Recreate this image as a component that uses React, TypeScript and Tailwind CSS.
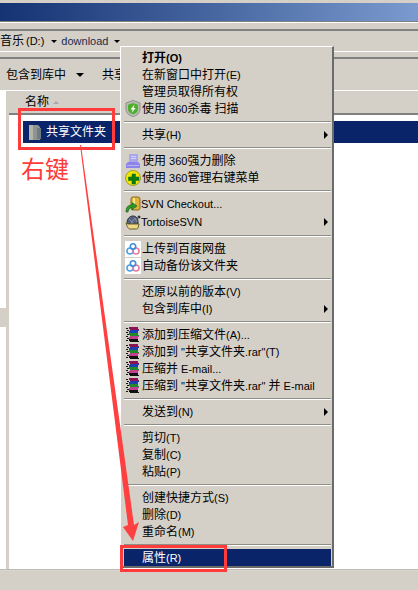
const font = "font-['Liberation_Sans','Noto_Sans_CJK_SC',sans-serif]";

function Shield() {
  return (
    <svg width="16" height="17" viewBox="0 0 16 17">
      <path d="M8 .5 15 3v6c0 4-3 6.500-7 7.500C4 15.500 1 13 1 9V3z" fill="#b9bdb6" stroke="#8c908a" />
      <path d="M8 3l5 1.800V9c0 2.800-2 4.500-5 5.300C5 13.500 3 11.800 3 9V4.800z" fill="#4fae2e" />
      <path d="M9.500 4.500 5.500 9.500h2.300L6.500 13l4.200-5H8.500z" fill="#fff" />
    </svg>
  );
}

function Eraser() {
  return (
    <svg width="16" height="16" viewBox="0 0 16 16">
      <rect x="4" y="1" width="9" height="9" rx="1" fill="#aaa6ee" />
      <path d="M3 9h10l2 2v4H1v-4z" fill="#8b85ea" />
      <rect x="6" y="3" width="5" height="1" fill="#d6d4f6" />
      <rect x="6" y="5" width="5" height="1" fill="#d6d4f6" />
      <rect x="2" y="12" width="12" height="1" fill="#b8b4f2" />
    </svg>
  );
}

function PlusBall() {
  return (
    <svg width="16" height="16" viewBox="0 0 16 16">
      <circle cx="8" cy="8" r="7.500" fill="#f2e600" stroke="#6f7a00" strokeWidth=".6" />
      <path d="M7 4h3.500v3H14v3.500h-3.500V14H7v-3.500H3.500V7H7z" fill="#0f7a12" stroke="#063" strokeWidth=".5" />
    </svg>
  );
}

function Checkout() {
  return (
    <svg width="16" height="17" viewBox="0 0 16 17">
      <rect x="6" y="1" width="9" height="13" rx="2" fill="#e0b23c" stroke="#8f6a12" />
      <rect x="8" y="2" width="2" height="11" fill="#f8e39a" />
      <path d="M1 16c0-5 2-7 6-7V6.500L12 10l-5 4v-2.500c-2 0-3.500 1.500-4 4.500z" fill="#2e9a25" stroke="#125c10" strokeWidth=".6" />
    </svg>
  );
}

function Tortoise() {
  return (
    <svg width="16" height="16" viewBox="0 0 16 16">
      <path d="M2 9c0-4 2.500-7 6-7s5 3 5 6v2H3z" fill="#55607c" stroke="#2a3040" />
      <path d="M4 5l3 3 3-4M7 8v2M10 4l2 4" stroke="#8d96ae" fill="none" />
      <path d="M1 9l2 1h11l-1 4c-.3 1-1 1-2 1H5c-2 0-3-3-4-6z" fill="#ecd98a" stroke="#6f5f20" />
      <circle cx="14" cy="3" r="1.500" fill="#333" />
    </svg>
  );
}

function Cloud() {
  return (
    <svg width="16" height="16" viewBox="0 0 16 16">
      <rect width="16" height="16" fill="#fff" />
      <circle cx="5" cy="10" r="3" fill="none" stroke="#4aa3e8" strokeWidth="1.600" />
      <circle cx="11" cy="10" r="3" fill="none" stroke="#e87aa0" strokeWidth="1.600" />
      <circle cx="8" cy="5.500" r="2.700" fill="none" stroke="#3f8fdc" strokeWidth="1.600" />
    </svg>
  );
}

function Rar() {
  return (
    <svg width="14" height="15" viewBox="0 0 14 15" shapeRendering="crispEdges">
      <path d="M3 0h9l1 3H4z" fill="#8a1452" />
      <path d="M4 3h9l-1 3H3z" fill="#1e3fae" />
      <path d="M3 6h9l1 3H4z" fill="#1f8a2a" />
      <path d="M4 9h9l-1 3H3z" fill="#c23f8f" />
      <path d="M3 12h9l1 3H4z" fill="#111" />
      <path d="M0 1h2v1H0zM1 3h2v1H1zM0 5h2v1H0zM1 7h2v1H1zM0 9h2v1H0zM1 11h2v1H1zM0 13h2v1H0z" fill="#111" />
    </svg>
  );
}

// Latin runs sit a size below the CJK ones, as Tahoma 11 next to a 12px CJK face
function Label({ text }: { text: string }) {
  return (
    <>
      {text.split(/([\u4e00-\u9fff]+)/).map((part, i) =>
        i % 2 === 1 ? (
          <span key={i} className="text-[12px]">{part}</span>
        ) : (
          <span key={i} className="text-[11px]">{part}</span>
        )
      )}
    </>
  );
}

function Item({ label, bold, icon, arrow, tight, h = "h-[17px]" }: { label: string; bold?: boolean; icon?: React.ReactNode; arrow?: boolean; tight?: boolean; h?: string }) {
  return (
    <div className={`flex items-center ${h}`}>
      <div className="w-[18px] flex justify-center shrink-0">{icon}</div>
      <span className={`whitespace-nowrap ${tight ? "-ml-[1px]" : ""} ${bold ? "font-bold" : ""}`}>
        <Label text={label} />
      </span>
      {arrow && <span className="ml-auto mr-[3px] w-0 h-0 border-y-[4px] border-y-transparent border-l-[4px] border-l-black" />}
    </div>
  );
}

function Sep() {
  return (
    <div className="h-[9px] flex items-center">
      <div className="w-full h-[2px] bg-[#8f8d88] border-b border-b-white" />
    </div>
  );
}

export default function App() {
  return (
    <div className={`${font} relative w-[418px] h-[590px] overflow-hidden bg-[#d4d0c8] text-[12px] text-black flex flex-col`}>
      {/* window chrome */}
      <div className="h-[3px] bg-[#d4d0c8]" />
      <div className="h-[18px] bg-gradient-to-r from-[#153272] to-[#7b9bcf]" />
      <div className="h-[1px] bg-[#808080]" />
      <div className="h-[1px] bg-white" />
      <div className="h-[6px]" />
      <div className="h-[2px] bg-[#808080]" />

      <div className="h-[20px] flex items-center">
        <span>音乐</span>
        <span className="ml-[2px] text-[11px]">(D:)</span>
        <span className="ml-[7px] w-0 h-0 border-x-[3px] border-x-transparent border-t-[3px] border-t-black" />
        <span className="ml-[4px] text-[#1c2a4a] text-[11px]">download</span>
        <span className="ml-[6px] w-0 h-0 border-x-[3px] border-x-transparent border-t-[3px] border-t-black" />
      </div>
      <div className="h-[1px] bg-white" />
      <div className="h-[5px]" />
      <div className="h-[2px] bg-[#808080]" />

      <div className="h-[31px] flex items-center pl-[6px]">
        <span>包含到库中</span>
        <span className="ml-[10px] w-0 h-0 border-x-[4px] border-x-transparent border-t-[4px] border-t-black" />
        <span className="ml-[18px]">共享</span>
      </div>
      <div className="h-[1px] bg-white" />

      <div className="flex-1 flex min-h-0">
        {/* nav pane */}
        <div className="w-[6px] bg-white flex flex-col">
          <div className="h-[217px]" />
          <div className="h-[19px] bg-[#d4d0c8]" />
        </div>
        <div className="w-[3px]" />

        {/* file list */}
        <div className="flex-1 flex flex-col">
          <div className="h-[22px] flex items-center pl-[16px]">
            <span>名称</span>
            <span className="ml-[4px] w-0 h-0 border-x-[3px] border-x-transparent border-b-[3px] border-b-[#a8a8a8]" />
          </div>
          <div className="h-[2px] bg-[#808080]" />
          <div className="flex-1 bg-white pt-[6px] pl-[14px]">
            <div className="h-[22px] bg-[#0a246a] text-white flex items-center pl-[5px] gap-[4px]">
              <svg width="14" height="17" viewBox="0 0 14 17">
                <path d="M1 1h9l2 2v13H1z" fill="#8f9492" />
                <path d="M1 1h4v15H1z" fill="#b3b6a6" />
                <path d="M9 4v11h4V4z" fill="#6f7a80" />
              </svg>
              <span>共享文件夹</span>
            </div>
          </div>
        </div>
      </div>

      <div className="h-[2px] bg-[#d9d6d0] border-t border-t-[#bdbab3]" />
      <div className="h-[19px]" />

      {/* context menu */}
      <div className="absolute left-[120px] top-[46px] w-[214px] bg-[#d4d0c8] border-t border-l border-t-white border-l-white border-r-2 border-r-[#6b6b6b] border-b-2 border-b-[#6b6b6b] pl-[3px] pr-[1px] pt-[2px]">
        <Item label="打开(O)" bold />
        <Item label="在新窗口中打开(E)" />
        <Item label="管理员取得所有权" />
        <Item label="使用 360杀毒 扫描" icon={<Shield />} />
        <Sep />
        <Item label="共享(H)" arrow />
        <Sep />
        <Item label="使用 360强力删除" icon={<Eraser />} />
        <Item label="使用 360管理右键菜单" icon={<PlusBall />} />
        <Sep />
        <Item label="SVN Checkout..." icon={<Checkout />} tight h="h-[18px]" />
        <Item label="TortoiseSVN" icon={<Tortoise />} tight arrow h="h-[18px]" />
        <Sep />
        <Item label="上传到百度网盘" icon={<Cloud />} />
        <Item label="自动备份该文件夹" icon={<Cloud />} />
        <Sep />
        <Item label="还原以前的版本(V)" />
        <Item label="包含到库中(I)" arrow />
        <Sep />
        <Item label="添加到压缩文件(A)..." icon={<Rar />} />
        <Item label='添加到 "共享文件夹.rar"(T)' icon={<Rar />} />
        <Item label="压缩并 E-mail..." icon={<Rar />} />
        <Item label='压缩到 "共享文件夹.rar" 并 E-mail' icon={<Rar />} />
        <Sep />
        <Item label="发送到(N)" arrow />
        <Sep />
        <Item label="剪切(T)" />
        <Item label="复制(C)" />
        <Item label="粘贴(P)" />
        <Sep />
        <Item label="创建快捷方式(S)" />
        <Item label="删除(D)" />
        <Item label="重命名(M)" />
        <Sep />
        <div className="bg-[#0a246a] text-white">
          <Item label="属性(R)" />
        </div>
      </div>

      {/* red annotations */}
      <div className="absolute left-[18px] top-[108px] w-[97px] h-[42px] border-[3px] border-[#ff3b3b]" />
      <div className="absolute left-[120px] top-[545px] w-[107px] h-[27px] border-[3px] border-[#ff3b3b]" />
      <div className="absolute left-[21px] top-[150px] text-[24px] leading-[36px] text-[#ff3b3b] font-['Noto_Sans_CJK_SC',sans-serif]">右键</div>
      <svg className="absolute left-0 top-0" width="418" height="590" viewBox="0 0 418 590">
        <path d="M80 145 81 145 134 525 139 522 133 541 123 527 128 525z" fill="#ff4040" />
      </svg>
    </div>
  );
}
